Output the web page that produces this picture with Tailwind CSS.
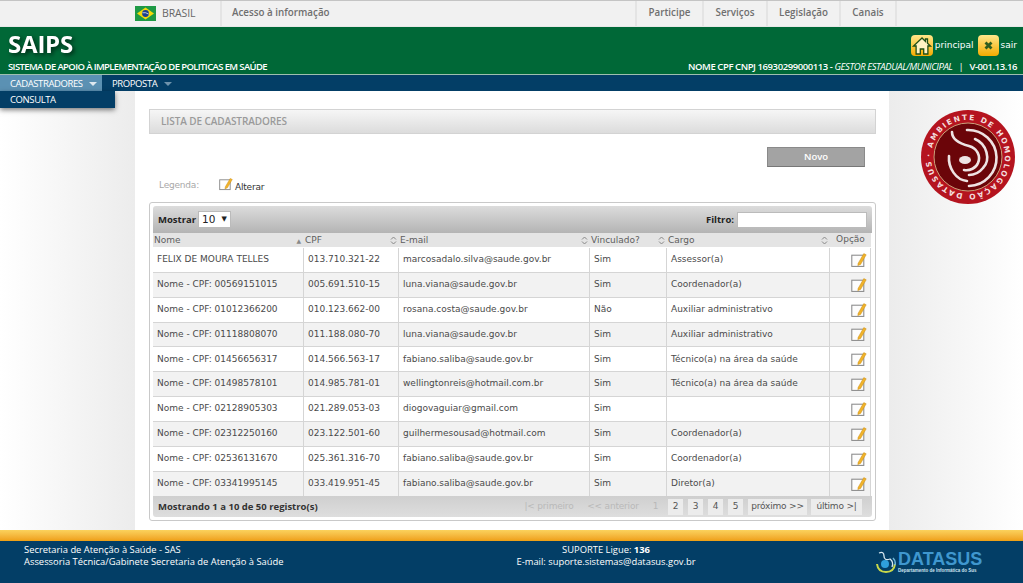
<!DOCTYPE html>
<html lang="en">
<head>
    <meta charset="UTF-8">
    <title>SAIPS - Lista de Cadastradores</title>
    <script src="https://cdn.jsdelivr.net/npm/@tailwindcss/browser@4"></script>
</head>
<body class="bg-white font-['Open_Sans',sans-serif] w-[1023px] h-[583px] overflow-hidden">
    <!-- Barra Brasil -->
    <div class="h-[26px] bg-[#f1f1f1] border-t border-[#c4c4c4] flex items-stretch text-[9.8px] font-semibold text-[#6f6f6f]">
        <div class="w-[220px] pl-[135px] flex items-center">
            <svg width="21" height="15" viewBox="0 0 21 15" class="mr-[6px] shrink-0"><rect width="21" height="15" fill="#1f9a45"/><polygon points="10.5,1.5 19,7.5 10.5,13.5 2,7.5" fill="#f5d90a"/><circle cx="10.5" cy="7.5" r="3.4" fill="#1d3f8f"/><path d="M7.4 6.8q3-.8 6.2 1.2" stroke="#fff" stroke-width=".7" fill="none"/></svg>
            <span class="font-normal text-[10.5px] text-[#666] tracking-[-0.1px]">BRASIL</span>
        </div>
        <div class="border-l-2 border-[#e4e4e4] pl-[10px] flex items-center w-[415px]">Acesso à informação</div>
        <div class="flex">
            <div class="w-[67px] border-l-2 border-[#e4e4e4] flex items-center justify-center">Participe</div>
            <div class="w-[64px] border-l-2 border-[#e4e4e4] flex items-center justify-center">Serviços</div>
            <div class="w-[73px] border-l-2 border-[#e4e4e4] flex items-center justify-center">Legislação</div>
            <div class="w-[58px] border-x-2 border-[#e4e4e4] flex items-center justify-center">Canais</div>
        </div>
    </div>

    <!-- Cabecalho -->
    <div class="h-[49px] bg-[#006837] border-t border-[#e8e8e8] border-b border-b-[#9fbfae] flex justify-between pl-[8px] pr-[6px] text-white">
        <div>
            <div class="text-[24px] font-bold leading-[33px] h-[33px] drop-shadow-[2px_2px_2px_rgba(0,0,0,0.6)] tracking-[-0.2px]">SAIPS</div>
            <div class="text-[9.5px] font-semibold leading-[14px] tracking-[-0.62px]">SISTEMA DE APOIO À IMPLEMENTAÇÃO DE POLITICAS EM SAÚDE</div>
        </div>
        <div class="flex flex-col items-end">
            <div class="flex items-center h-[33px] pt-[4px] text-[9px] font-['DejaVu_Sans']">
                <svg width="22" height="21" viewBox="0 0 22 21" class="mr-[2px]"><defs><linearGradient id="y1" x1="0" y1="0" x2="0" y2="1"><stop offset="0" stop-color="#ffe78a"/><stop offset="1" stop-color="#f4ab00"/></linearGradient></defs><rect width="22" height="21" rx="4" fill="url(#y1)"/><path d="M11 3 2.5 11h2.6v8h4.2v-5h3.4v5h4.2v-8h2.6l-3-2.8V4h-2v2.4z" fill="#fff3c4" stroke="#1f4f16" stroke-width="1.3"/></svg>
                <span class="mr-[4px]">principal</span>
                <svg width="21" height="21" viewBox="0 0 21 21" class="mr-[2px]"><rect width="21" height="21" rx="4" fill="url(#y1)"/><path d="M7.5 7.5l6 6m0-6l-6 6" stroke="#2f5d1f" stroke-width="2.8"/></svg>
                <span>sair</span>
            </div>
            <div class="text-[9.5px] leading-[14px] tracking-[-0.42px]"><span class="font-semibold">NOME CPF CNPJ 16930299000113 -</span> <i>GESTOR ESTADUAL/MUNICIPAL</i> <span class="mx-[4px]">|</span> <span class="font-semibold">V-001.13.16</span></div>
        </div>
    </div>

    <!-- Menu -->
    <div class="h-[16px] bg-[#033e66] flex text-[9.5px] text-white leading-[16px] relative z-10 tracking-[-0.4px]">
        <div class="w-[102px] bg-[#5b91b3] pl-[10px] pt-[1px] flex items-center gap-[6px]">CADASTRADORES <span class="w-0 h-0 border-x-[4px] border-x-transparent border-t-[4px] border-t-[#dfe9f0]"></span></div>
        <div class="pl-[10px] pt-[1px] flex items-center gap-[7px]">PROPOSTA <span class="w-0 h-0 border-x-[4px] border-x-transparent border-t-[4px] border-t-[#6f93ac]"></span></div>
        <div class="absolute left-0 top-[16px] w-[115px] h-[17px] bg-[#033e66] pl-[10px] pt-[1px] shadow-[0_2px_5px_rgba(0,0,0,0.5)]">CONSULTA</div>
    </div>

    <!-- Conteudo -->
    <div class="h-[439px] flex">
        <div class="w-[135px] bg-gradient-to-r from-white to-[#ececec]"></div>
        <div class="w-[754px] pl-[14px] pr-[13px] pt-[18px] bg-white">
            <div class="h-[25px] border border-[#d3d3d3] bg-gradient-to-b from-[#f6f6f6] to-[#dcdcdc] pl-[11px] text-[10px] font-semibold text-[#9a9a9a] leading-[23px] tracking-[-0.1px]">LISTA DE CADASTRADORES</div>
            <div class="flex justify-end mt-[13px] pr-[11px]">
                <div class="w-[98px] h-[20px] bg-[#a3a3a3] border border-[#8a8a8a] border-b-[#777] text-white text-[9.5px] font-semibold flex items-center justify-center">Novo</div>
            </div>
            <div class="flex items-center h-[18px] mt-[10px] pl-[10px] text-[9px] font-['DejaVu_Sans'] tracking-[-0.2px]">
                <span class="text-[#a8a8a8] w-[60px]">Legenda:</span>
                <svg width="14" height="14" viewBox="0 0 20 18" class="mb-[4px] mr-[2px]"><rect x="1" y="3" width="15" height="14" fill="#fdfdfd" stroke="#888" stroke-width="1.3"/><path d="M9 13 16 1l3 1.5-7 12-3.5 1.5z" fill="#f0b32a" stroke="#c98a10" stroke-width=".6"/></svg>
                <span class="text-[#333] mt-[3px]">Alterar</span>
            </div>

            <!-- Tabela -->
            <div class="mt-[7px] h-[319px] border border-[#c9c9c9] rounded-[3px] p-[3px]">
                <div class="h-[27px] bg-gradient-to-b from-[#dcdcdc] to-[#b4b4b4] rounded-t-[3px] flex items-center justify-between pl-[5px] pr-[5px] pt-[1px] text-[9.5px] font-bold text-[#222]">
                    <div class="flex items-center gap-[2px]">Mostrar
                        <div class="w-[33px] h-[17px] mt-[-1px] bg-white border border-[#bbb] font-normal flex items-center pl-[3px] gap-[6px] leading-none font-['DejaVu_Sans'] text-[10.5px]">10 <span class="text-[7px]">▼</span></div>
                    </div>
                    <div class="flex items-center gap-[3px]">Filtro:
                        <div class="w-[130px] h-[16px] mt-[-1px] bg-white border border-[#bbb]"></div>
                    </div>
                </div>
                <div class="w-[718px] text-[9px] font-['DejaVu_Sans'] text-[#4a4a4a]">
                    <div class="h-[14px] bg-[#e4e4e4] grid grid-cols-[151px_95px_191px_77px_163px_41px] leading-[13px] text-[#5e5e5e]">
                        <div class="flex justify-between items-center pl-[1px] pr-[3px]">Nome <span class="text-[6px] text-[#888]">▲</span></div>
                        <div class="flex justify-between items-center pl-[1px] pr-[2px]">CPF <svg width="7" height="9" viewBox="0 0 7 9" fill="none" stroke="#888"><path d="M1 3.5 3.5 1 6 3.5M1 5.5 3.5 8 6 5.5"/></svg></div>
                        <div class="flex justify-between items-center pl-[1px] pr-[2px]">E-mail <svg width="7" height="9" viewBox="0 0 7 9" fill="none" stroke="#888"><path d="M1 3.5 3.5 1 6 3.5M1 5.5 3.5 8 6 5.5"/></svg></div>
                        <div class="flex justify-between items-center pl-[1px] pr-[2px]">Vinculado? <svg width="7" height="9" viewBox="0 0 7 9" fill="none" stroke="#888"><path d="M1 3.5 3.5 1 6 3.5M1 5.5 3.5 8 6 5.5"/></svg></div>
                        <div class="flex justify-between items-center pl-[1px] pr-[2px]">Cargo <svg width="7" height="9" viewBox="0 0 7 9" fill="none" stroke="#888"><path d="M1 3.5 3.5 1 6 3.5M1 5.5 3.5 8 6 5.5"/></svg></div>
                        <div class="text-center">Opção</div>
                    </div>
                    <div id="rows" class="pt-[1px]">
                        <div class="h-[24.85px] grid grid-cols-[151px_95px_191px_77px_163px_41px] items-center border-b border-[#d5d5d5] bg-white *:h-full *:flex *:items-center *:pl-[4px] *:border-r *:border-[#d5d5d5]"><div>FELIX DE MOURA TELLES</div><div>013.710.321-22</div><div>marcosadalo.silva@saude.gov.br</div><div>Sim</div><div>Assessor(a)</div><div><svg width="16" height="16" viewBox="0 0 20 18" class="ml-[17px] shrink-0"><rect x="1" y="3" width="15" height="14" fill="#fdfdfd" stroke="#888" stroke-width="1.3"/><path d="M9 13 16 1l3 1.5-7 12-3.5 1.5z" fill="#f0b32a" stroke="#c98a10" stroke-width=".6"/></svg></div></div>
                        <div class="h-[24.85px] grid grid-cols-[151px_95px_191px_77px_163px_41px] items-center border-b border-[#d5d5d5] bg-[#f2f2f2] *:h-full *:flex *:items-center *:pl-[4px] *:border-r *:border-[#d5d5d5]"><div>Nome - CPF: 00569151015</div><div>005.691.510-15</div><div>luna.viana@saude.gov.br</div><div>Sim</div><div>Coordenador(a)</div><div><svg width="16" height="16" viewBox="0 0 20 18" class="ml-[17px] shrink-0"><rect x="1" y="3" width="15" height="14" fill="#fdfdfd" stroke="#888" stroke-width="1.3"/><path d="M9 13 16 1l3 1.5-7 12-3.5 1.5z" fill="#f0b32a" stroke="#c98a10" stroke-width=".6"/></svg></div></div>
                        <div class="h-[24.85px] grid grid-cols-[151px_95px_191px_77px_163px_41px] items-center border-b border-[#d5d5d5] bg-white *:h-full *:flex *:items-center *:pl-[4px] *:border-r *:border-[#d5d5d5]"><div>Nome - CPF: 01012366200</div><div>010.123.662-00</div><div>rosana.costa@saude.gov.br</div><div>Não</div><div>Auxiliar administrativo</div><div><svg width="16" height="16" viewBox="0 0 20 18" class="ml-[17px] shrink-0"><rect x="1" y="3" width="15" height="14" fill="#fdfdfd" stroke="#888" stroke-width="1.3"/><path d="M9 13 16 1l3 1.5-7 12-3.5 1.5z" fill="#f0b32a" stroke="#c98a10" stroke-width=".6"/></svg></div></div>
                        <div class="h-[24.85px] grid grid-cols-[151px_95px_191px_77px_163px_41px] items-center border-b border-[#d5d5d5] bg-[#f2f2f2] *:h-full *:flex *:items-center *:pl-[4px] *:border-r *:border-[#d5d5d5]"><div>Nome - CPF: 01118808070</div><div>011.188.080-70</div><div>luna.viana@saude.gov.br</div><div>Sim</div><div>Auxiliar administrativo</div><div><svg width="16" height="16" viewBox="0 0 20 18" class="ml-[17px] shrink-0"><rect x="1" y="3" width="15" height="14" fill="#fdfdfd" stroke="#888" stroke-width="1.3"/><path d="M9 13 16 1l3 1.5-7 12-3.5 1.5z" fill="#f0b32a" stroke="#c98a10" stroke-width=".6"/></svg></div></div>
                        <div class="h-[24.85px] grid grid-cols-[151px_95px_191px_77px_163px_41px] items-center border-b border-[#d5d5d5] bg-white *:h-full *:flex *:items-center *:pl-[4px] *:border-r *:border-[#d5d5d5]"><div>Nome - CPF: 01456656317</div><div>014.566.563-17</div><div>fabiano.saliba@saude.gov.br</div><div>Sim</div><div>Técnico(a) na área da saúde</div><div><svg width="16" height="16" viewBox="0 0 20 18" class="ml-[17px] shrink-0"><rect x="1" y="3" width="15" height="14" fill="#fdfdfd" stroke="#888" stroke-width="1.3"/><path d="M9 13 16 1l3 1.5-7 12-3.5 1.5z" fill="#f0b32a" stroke="#c98a10" stroke-width=".6"/></svg></div></div>
                        <div class="h-[24.85px] grid grid-cols-[151px_95px_191px_77px_163px_41px] items-center border-b border-[#d5d5d5] bg-[#f2f2f2] *:h-full *:flex *:items-center *:pl-[4px] *:border-r *:border-[#d5d5d5]"><div>Nome - CPF: 01498578101</div><div>014.985.781-01</div><div>wellingtonreis@hotmail.com.br</div><div>Sim</div><div>Técnico(a) na área da saúde</div><div><svg width="16" height="16" viewBox="0 0 20 18" class="ml-[17px] shrink-0"><rect x="1" y="3" width="15" height="14" fill="#fdfdfd" stroke="#888" stroke-width="1.3"/><path d="M9 13 16 1l3 1.5-7 12-3.5 1.5z" fill="#f0b32a" stroke="#c98a10" stroke-width=".6"/></svg></div></div>
                        <div class="h-[24.85px] grid grid-cols-[151px_95px_191px_77px_163px_41px] items-center border-b border-[#d5d5d5] bg-white *:h-full *:flex *:items-center *:pl-[4px] *:border-r *:border-[#d5d5d5]"><div>Nome - CPF: 02128905303</div><div>021.289.053-03</div><div>diogovaguiar@gmail.com</div><div>Sim</div><div></div><div><svg width="16" height="16" viewBox="0 0 20 18" class="ml-[17px] shrink-0"><rect x="1" y="3" width="15" height="14" fill="#fdfdfd" stroke="#888" stroke-width="1.3"/><path d="M9 13 16 1l3 1.5-7 12-3.5 1.5z" fill="#f0b32a" stroke="#c98a10" stroke-width=".6"/></svg></div></div>
                        <div class="h-[24.85px] grid grid-cols-[151px_95px_191px_77px_163px_41px] items-center border-b border-[#d5d5d5] bg-[#f2f2f2] *:h-full *:flex *:items-center *:pl-[4px] *:border-r *:border-[#d5d5d5]"><div>Nome - CPF: 02312250160</div><div>023.122.501-60</div><div>guilhermesousad@hotmail.com</div><div>Sim</div><div>Coordenador(a)</div><div><svg width="16" height="16" viewBox="0 0 20 18" class="ml-[17px] shrink-0"><rect x="1" y="3" width="15" height="14" fill="#fdfdfd" stroke="#888" stroke-width="1.3"/><path d="M9 13 16 1l3 1.5-7 12-3.5 1.5z" fill="#f0b32a" stroke="#c98a10" stroke-width=".6"/></svg></div></div>
                        <div class="h-[24.85px] grid grid-cols-[151px_95px_191px_77px_163px_41px] items-center border-b border-[#d5d5d5] bg-white *:h-full *:flex *:items-center *:pl-[4px] *:border-r *:border-[#d5d5d5]"><div>Nome - CPF: 02536131670</div><div>025.361.316-70</div><div>fabiano.saliba@saude.gov.br</div><div>Sim</div><div>Coordenador(a)</div><div><svg width="16" height="16" viewBox="0 0 20 18" class="ml-[17px] shrink-0"><rect x="1" y="3" width="15" height="14" fill="#fdfdfd" stroke="#888" stroke-width="1.3"/><path d="M9 13 16 1l3 1.5-7 12-3.5 1.5z" fill="#f0b32a" stroke="#c98a10" stroke-width=".6"/></svg></div></div>
                        <div class="h-[24.85px] grid grid-cols-[151px_95px_191px_77px_163px_41px] items-center bg-[#f2f2f2] *:h-full *:flex *:items-center *:pl-[4px] *:border-r *:border-[#d5d5d5]"><div>Nome - CPF: 03341995145</div><div>033.419.951-45</div><div>fabiano.saliba@saude.gov.br</div><div>Sim</div><div>Diretor(a)</div><div><svg width="16" height="16" viewBox="0 0 20 18" class="ml-[17px] shrink-0"><rect x="1" y="3" width="15" height="14" fill="#fdfdfd" stroke="#888" stroke-width="1.3"/><path d="M9 13 16 1l3 1.5-7 12-3.5 1.5z" fill="#f0b32a" stroke="#c98a10" stroke-width=".6"/></svg></div></div>
                    </div>
                </div>
                <div class="h-[21px] bg-gradient-to-b from-[#cfcfcf] to-[#dedede] rounded-b-[3px] flex items-center justify-between pl-[5px] pr-[10px] text-[#333]">
                    <span class="text-[9.5px] font-bold">Mostrando 1 a 10 de 50 registro(s)</span>
                    <div class="flex gap-[5px] text-[9px] tracking-[-0.2px] font-['DejaVu_Sans'] text-[#555] *:h-[16px] *:flex *:items-center *:justify-center *:bg-[#ececec]">
                        <span class="w-[58px] !bg-transparent text-[#b9b9b9]">|&lt; primeiro</span>
                        <span class="w-[60px] !bg-transparent text-[#b9b9b9]">&lt;&lt; anterior</span>
                        <span class="w-[15px] !bg-transparent text-[#b9b9b9]">1</span>
                        <span class="w-[15px]">2</span>
                        <span class="w-[15px]">3</span>
                        <span class="w-[15px]">4</span>
                        <span class="w-[15px]">5</span>
                        <span class="w-[59px]">próximo &gt;&gt;</span>
                        <span class="w-[51px] ml-[-1px]">último &gt;|</span>
                    </div>
                </div>
            </div>
        </div>
        <!-- Selo -->
        <div class="flex-1 bg-gradient-to-r from-[#ececec] to-white pl-[32px] pt-[19px]">
            <svg width="94" height="94" viewBox="0 0 94 94">
                <circle cx="47" cy="47" r="47" fill="#b5141f"/>
                <circle cx="47" cy="47" r="34" fill="#6b0509" stroke="#c9a27a" stroke-width="1"/>
                <defs>
                    <path id="ring" d="M10 47A37 37 0 1 1 84 47A37 37 0 1 1 10 47"/>
                </defs>
                <text font-family="DejaVu Sans" font-size="7.5" font-weight="700" fill="#f3dede" textLength="228"><textPath href="#ring">· AMBIENTE DE HOMOLOGAÇÃO  DATASUS</textPath></text>
                <g fill="none" stroke="#eee3e3" stroke-width="2.6" stroke-linecap="round">
                    <path d="M46 20A28 27.5 0 0 1 48 76"/>
                    <path d="M54 29C66 34 70 50 62 58 58 63 53 65 48 65"/>
                    <path d="M31 22C31 30 40 34 48 36 56 38 60 46 57 53 55 58 49 61 43 60"/>
                    <path d="M28 46C27 58 35 70 46 71"/>
                </g>
                <ellipse cx="44" cy="50" rx="6" ry="4" fill="#eee3e3"/>
            </svg>
        </div>
    </div>

    <!-- Rodape -->
    <div class="h-[11px] bg-gradient-to-b from-[#fbd25c] to-[#ee9f12]"></div>
    <div class="h-[42px] bg-[#033e66] text-white text-[9.4px] leading-[12px] flex pt-[3px]">
        <div class="w-[430px] pl-[24px]">
            <div>Secretaria de Atenção à Saúde - SAS</div>
            <div>Assessoria Técnica/Gabinete Secretaria de Atenção à Saúde</div>
        </div>
        <div class="w-[352px] text-center">
            <div>SUPORTE Ligue: <b>136</b></div>
            <div>E-mail: suporte.sistemas@datasus.gov.br</div>
        </div>
        <div class="flex items-center ml-[94px] mt-[5px] h-[26px]">
            <svg width="20" height="24" viewBox="0 0 20 24" class="mr-[2px]"><circle cx="9" cy="14" r="4" fill="#2f9fdc"/><path d="M3 3q5-2 5 3t6 3q4 3 2 8" fill="none" stroke="#d8e8f0" stroke-width="1.3"/><path d="M1 14q1 8 9 8t9-8" fill="none" stroke="#c8d84a" stroke-width="2"/><path d="M17 8q3 3 2 7" fill="none" stroke="#6fb6d8" stroke-width="1.5"/></svg>
            <div class="text-[#3f97cf]">
                <div class="font-['Liberation_Sans'] font-bold text-[18px] leading-[17px]">DATASUS</div>
                <div class="text-[4.5px] text-[#cfe3ef] leading-[6px] whitespace-nowrap font-['Liberation_Sans'] font-bold">Departamento de Informática do Sus</div>
            </div>
        </div>
    </div>
</body>
</html>
